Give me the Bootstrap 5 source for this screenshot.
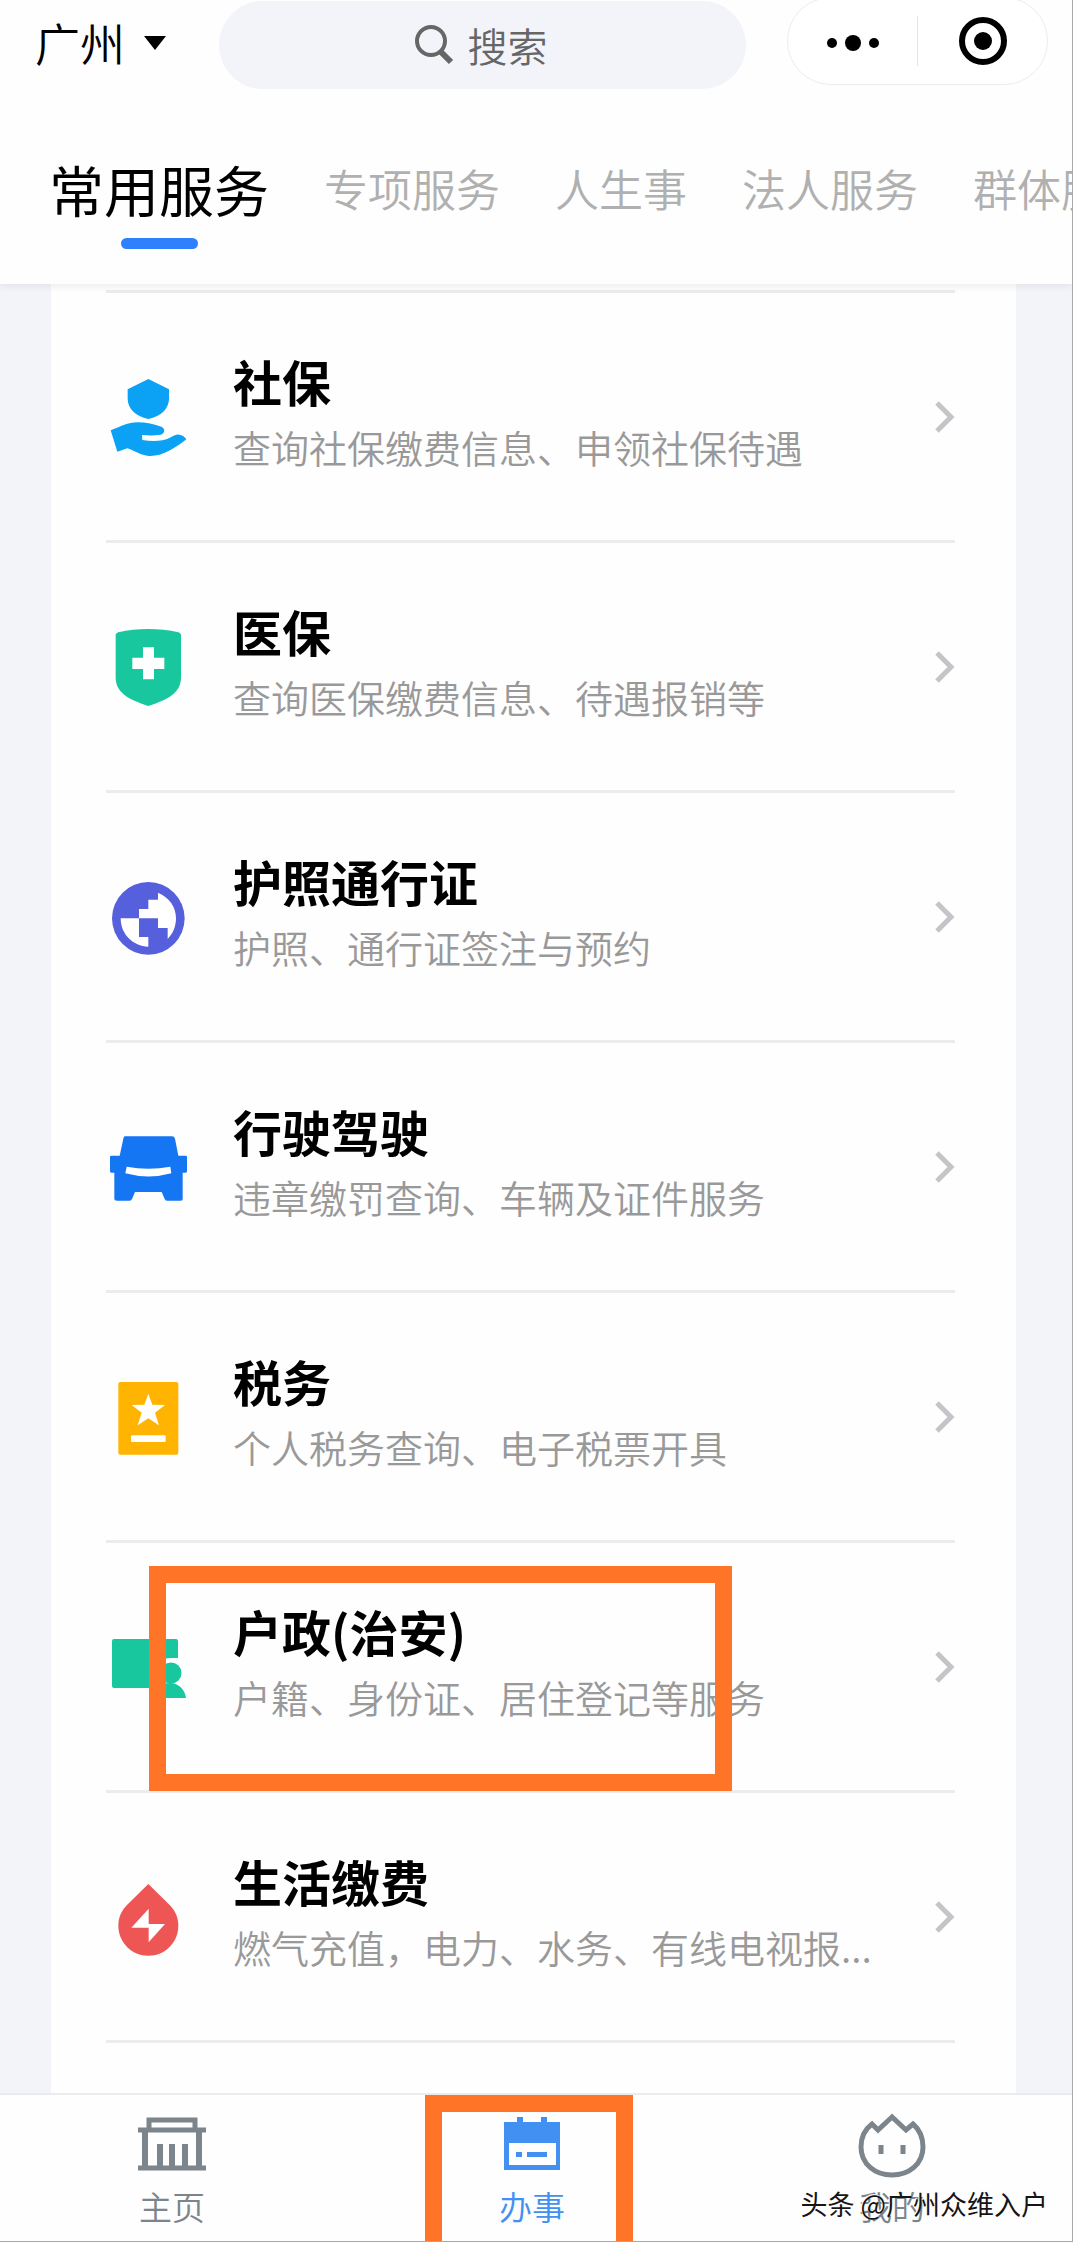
<!DOCTYPE html>
<html lang="zh-CN">
<head>
<meta charset="utf-8">
<meta name="viewport" content="width=device-width, initial-scale=1">
<title>办事 - 常用服务</title>
<link href="https://cdn.jsdelivr.net/npm/bootstrap@5.3.0/dist/css/bootstrap.min.css" rel="stylesheet">
<style>
  body { font-family: "Noto Sans CJK SC", sans-serif; background: #f2f4f9; color: #000; }
  a { color: inherit; text-decoration: none; }
  .app-shell { min-height: 100vh; border-right: 1px solid #a9a9ab; border-bottom: 1px solid #a9a9ab; overflow: hidden; }
  .app-header { background: #fefefe; height: 284px; box-shadow: 0 2px 8px rgba(0, 0, 0, .08); z-index: 1; }
  .top-row { height: 104px; padding: 1px 24px 0 35px; }
  .city-btn { height: 84px; width: 184px; font-size: 45px; line-height: 84px; font-weight: 350; gap: 18px; color: #000; }
  .search-pill { height: 88px; background: #f2f4f9; gap: 14px; margin-right: 41px; }
  .search-pill input { width: 84px; font-size: 40px; line-height: 56px; font-weight: 350; background: none; outline: 0; color: #444; }
  .search-pill input::placeholder { color: #666; opacity: 1; }
  .capsule { height: 88px; width: 261px; margin-top: -4px; border: 1px solid #ececec; background: #fff; }
  .capsule button { flex: 1 1 0; background: none; }
  .capsule-line { width: 1px; height: 50px; background: #e4e4e4; }
  .tab-strip { padding: 50px 0 0 49px; gap: 55px; }
  .tab-strip a { font-size: 44px; line-height: 68px; font-weight: 350; color: #b0b0b0; flex-shrink: 0; }
  .tab-strip a.current { font-size: 55px; font-weight: 400; color: #000; }
  .tab-strip a.current::after { content: ""; display: block; width: 77px; height: 11px; margin: 16px auto 0; border-radius: 6px; background: #2f80fc; }
  .service-panel { background: #fefefe; margin: 0 56px 0 51px; padding: 6px 61px 0 55px; }
  .service-list { border-top: 3px solid #ececec; }
  .service-row { height: 250px; border-bottom: 3px solid #ececec; }
  .service-icon { width: 80px; height: 80px; margin: 0 45px 0 2px; flex-shrink: 0; }
  .service-text { padding-bottom: 6px; }
  .service-title { font-size: 49px; line-height: 66px; font-weight: 700; }
  .service-desc { font-size: 38px; line-height: 66px; font-weight: 350; color: #999; white-space: nowrap; }
  .chevron { width: 22px; height: 34px; }
  .mark-box { position: absolute; border: 17px solid #ff7426; pointer-events: none; }
  .mark-service { left: 43px; top: 23px; width: 583px; height: 225px; }
  .mark-tab { left: 73px; top: 0; width: 208px; height: 147px; border-bottom: 0; }
  .bottom-bar { height: 148px; background: #fefefe; border-top: 2px solid #e9ebef; z-index: 1; }
  .bottom-tabs { margin-left: -8px; }
  .bottom-tabs a { flex: 1 1 0; padding-top: 17px; color: #7c848c; font-size: 33px; line-height: 44px; font-weight: 350; }
  .bottom-tabs a.current { color: #4190f2; }
  .bottom-tabs svg { width: 80px; height: 72px; }
  .credit { position: absolute; right: 24px; bottom: 17px; font-size: 27px; line-height: 40px; color: #151515; text-shadow: -1px -1px 0 #fff; white-space: nowrap; }
</style>
<script src="https://cdn.jsdelivr.net/npm/bootstrap@5.3.0/dist/js/bootstrap.bundle.min.js"></script>
</head>
<body>
<div class="app-shell d-flex flex-column">
  <header class="app-header position-relative flex-shrink-0">
    <div class="top-row d-flex align-items-start">
      <button type="button" class="city-btn border-0 bg-transparent p-0 d-flex align-items-center flex-shrink-0">广州
        <svg width="24" height="16" viewBox="0 0 24 16" aria-hidden="true"><path d="M1 1h22L12 15z"/></svg>
      </button>
      <label class="search-pill rounded-pill flex-grow-1 d-flex align-items-center justify-content-center">
        <svg width="40" height="40" viewBox="0 0 40 40" fill="none" stroke="#666" aria-hidden="true"><circle cx="17" cy="16" r="14" stroke-width="4"/><path d="M27 27l10 10" stroke-width="6"/></svg>
        <input type="text" class="border-0 p-0" placeholder="搜索" aria-label="搜索">
      </label>
      <div class="capsule rounded-pill d-flex align-items-center flex-shrink-0">
        <button type="button" class="border-0 p-0" aria-label="更多"><svg width="54" height="20" viewBox="0 0 54 20"><circle cx="6" cy="10" r="5"/><circle cx="27" cy="10" r="8"/><circle cx="48" cy="10" r="5"/></svg></button>
        <span class="capsule-line"></span>
        <button type="button" class="border-0 p-0" aria-label="关闭"><svg width="50" height="50" viewBox="0 0 50 50"><circle cx="25" cy="25" r="21" fill="none" stroke="#000" stroke-width="6"/><circle cx="25" cy="25" r="9"/></svg></button>
      </div>
    </div>
    <nav class="tab-strip d-flex align-items-start text-nowrap overflow-hidden" aria-label="服务分类">
      <a href="#" class="current" aria-current="page">常用服务</a>
      <a href="#">专项服务</a>
      <a href="#">人生事</a>
      <a href="#">法人服务</a>
      <a href="#">群体服务</a>
    </nav>
  </header>

  <main class="service-panel flex-grow-1">
    <div class="service-list">
      <a href="#" class="service-row d-flex align-items-center">
        <svg class="service-icon" viewBox="204 111 240 240" fill="#0ba1f4"><path d="M325 117l62 31v28c0 29-23 52-62 61-39-9-62-32-62-61v-28z"/><path d="M212 271c30-11 52-24 80-24 26 0 52 6 72 13 12 4 12 20-2 24-16 3-36 3-56 1l1 15c35 5 62 3 83-7 10-5 18-10 27-9 10 1 18 7 22 14-36 28-70 50-108 50-27 0-46-15-69-23l-30 10z"/></svg>
        <div class="service-text flex-grow-1"><div class="service-title">社保</div><div class="service-desc">查询社保缴费信息、申领社保待遇</div></div>
        <svg class="chevron" viewBox="0 0 22 34" fill="none" stroke="#c5c5c9" stroke-width="5"><path d="M4 3l14 14L4 31"/></svg>
      </a>
      <a href="#" class="service-row d-flex align-items-center">
        <svg class="service-icon" viewBox="204 861 240 240"><path fill="#18c79e" d="M227 886c0-5 3-7 8-9 58-13 122-13 180 0 5 2 8 4 8 9v126c0 46-36 66-98 86-62-20-98-40-98-86z"/><path fill="#fff" d="M309 922h33v31h31v34h-31v31h-33v-31h-32v-34h32z"/></svg>
        <div class="service-text flex-grow-1"><div class="service-title">医保</div><div class="service-desc">查询医保缴费信息、待遇报销等</div></div>
        <svg class="chevron" viewBox="0 0 22 34" fill="none" stroke="#c5c5c9" stroke-width="5"><path d="M4 3l14 14L4 31"/></svg>
      </a>
      <a href="#" class="service-row d-flex align-items-center">
        <svg class="service-icon" viewBox="204 111 240 240"><circle cx="325" cy="235" r="109" fill="#565fdc"/><path fill="#fff" d="M354 158c34 15 54 42 54 77 0 24-9 46-25 62v-33h-29v-29h-57v-28h28v-28h29zM242 235h55v56h28v29c-46-1-83-37-83-85z"/></svg>
        <div class="service-text flex-grow-1"><div class="service-title">护照通行证</div><div class="service-desc">护照、通行证签注与预约</div></div>
        <svg class="chevron" viewBox="0 0 22 34" fill="none" stroke="#c5c5c9" stroke-width="5"><path d="M4 3l14 14L4 31"/></svg>
      </a>
      <a href="#" class="service-row d-flex align-items-center">
        <svg class="service-icon" viewBox="204 861 240 240"><path fill="#1576f4" d="M254 889h142q7 0 9 7l10 51h22q4 0 4 4v43q0 4-4 4h-9v79q0 5-5 5h-42q-5 0-7-5l-9-21h-80l-9 21q-2 5-7 5h-38q-8 0-8-5v-79h-9q-4 0-4-4v-43q0-4 4-4h25l11-51q2-7 4-7z"/><path fill="#fff" d="M260 980q65 12 131 0l3 20q-68 19-138 0z"/></svg>
        <div class="service-text flex-grow-1"><div class="service-title">行驶驾驶</div><div class="service-desc">违章缴罚查询、车辆及证件服务</div></div>
        <svg class="chevron" viewBox="0 0 22 34" fill="none" stroke="#c5c5c9" stroke-width="5"><path d="M4 3l14 14L4 31"/></svg>
      </a>
      <a href="#" class="service-row d-flex align-items-center">
        <svg class="service-icon" viewBox="204 111 240 240"><rect x="235" y="126" width="180" height="218" rx="6" fill="#ffb402"/><path fill="#fff" d="M325 161l12 33 38 1-30 23 12 38-32-21-32 21 12-38-30-23 38-1z"/><rect x="273" y="286" width="104" height="20" rx="3" fill="#fff"/></svg>
        <div class="service-text flex-grow-1"><div class="service-title">税务</div><div class="service-desc">个人税务查询、电子税票开具</div></div>
        <svg class="chevron" viewBox="0 0 22 34" fill="none" stroke="#c5c5c9" stroke-width="5"><path d="M4 3l14 14L4 31"/></svg>
      </a>
      <a href="#" class="service-row d-flex align-items-center position-relative">
        <svg class="service-icon" viewBox="0 0 80 80"><path fill="#18c79e" d="M6 12h62q2 0 2 2v17h-7c-9 0-16 6-16 15v15H6q-2 0-2-2V14q0-2 2-2z"/><circle cx="63" cy="46" r="10.500" fill="#18c79e"/><path fill="#18c79e" d="M45 71c1-8 7-15 17-15 9 0 15 7 16 15z"/></svg>
        <div class="service-text flex-grow-1"><div class="service-title">户政(治安)</div><div class="service-desc">户籍、身份证、居住登记等服务</div></div>
        <svg class="chevron" viewBox="0 0 22 34" fill="none" stroke="#c5c5c9" stroke-width="5"><path d="M4 3l14 14L4 31"/></svg>
        <span class="mark-box mark-service"></span>
      </a>
      <a href="#" class="service-row d-flex align-items-center">
        <svg class="service-icon" viewBox="204 111 240 240"><path fill="#ee5555" d="M325 132l64 63c17 17 26 38 26 62 0 50-40 90-90 90s-90-40-90-90c0-24 9-45 26-62z"/><path fill="#fff" d="M326 206v46h49l-49 55v-44h-52z"/></svg>
        <div class="service-text flex-grow-1"><div class="service-title">生活缴费</div><div class="service-desc">燃气充值，电力、水务、有线电视报...</div></div>
        <svg class="chevron" viewBox="0 0 22 34" fill="none" stroke="#c5c5c9" stroke-width="5"><path d="M4 3l14 14L4 31"/></svg>
      </a>
    </div>
  </main>

  <footer class="bottom-bar position-relative flex-shrink-0">
    <nav class="bottom-tabs d-flex text-center" aria-label="主导航">
      <a href="#" class="d-flex flex-column align-items-center">
        <svg viewBox="0 0 80 72" fill="none" stroke="#7c848c"><path stroke-width="5" d="M17 19V8h46v11M6 18h68M6 56h68"/><path stroke-width="6" d="M13 20v36M67 20v36M28 32v24M40 32v24M53 32v24"/></svg>
        <span>主页</span>
      </a>
      <a href="#" class="current d-flex flex-column align-items-center position-relative" aria-current="page">
        <svg viewBox="0 0 80 72"><path fill="#4190f2" d="M12 10h13V5h6v5h18V5h6v5h13v48H12z"/><path fill="#fefefe" d="M17 31h47v22H17z"/><path fill="#4190f2" d="M24 40h6v5h-6zM35 40h20v5H35z"/></svg>
        <span>办事</span>
        <span class="mark-box mark-tab"></span>
      </a>
      <a href="#" class="d-flex flex-column align-items-center">
        <svg viewBox="0 0 80 72" fill="none" stroke="#7c848c" stroke-width="5"><path d="M40 5L26 18l-6-6C12 18 9 27 9 35c0 17 14 28 31 28s31-11 31-28c0-8-3-17-10-23l-7 6z"/><path d="M29 33v9M51 33v9"/></svg>
        <span>我的</span>
      </a>
    </nav>
    <span class="credit">头条 @广州众维入户</span>
  </footer>
</div>
</body>
</html>
